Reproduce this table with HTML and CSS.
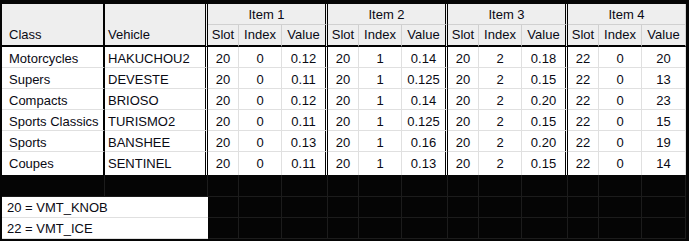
FILE: index.html
```html
<!DOCTYPE html>
<html>
<head>
<meta charset="utf-8">
<link rel="stylesheet" href="styles.css">
</head>
<body>
<div class="sheet">
  <div class="cell head hclass span2">Class</div>
  <div class="cell head hveh span2">Vehicle</div>
  <div class="cell head item c3">Item 1</div>
  <div class="cell head item c3">Item 2</div>
  <div class="cell head item c3">Item 3</div>
  <div class="cell head item c3 last">Item 4</div>

  <div class="cell head sub">Slot</div><div class="cell head sub">Index</div><div class="cell head sub dbl">Value</div>
  <div class="cell head sub">Slot</div><div class="cell head sub">Index</div><div class="cell head sub dbl">Value</div>
  <div class="cell head sub">Slot</div><div class="cell head sub">Index</div><div class="cell head sub dbl">Value</div>
  <div class="cell head sub">Slot</div><div class="cell head sub">Index</div><div class="cell head sub last">Value</div>

  <div class="cell d cls">Motorcycles</div><div class="cell d veh">HAKUCHOU2</div>
  <div class="cell d n">20</div><div class="cell d n">0</div><div class="cell d n dbl">0.12</div>
  <div class="cell d n">20</div><div class="cell d n">1</div><div class="cell d n dbl">0.14</div>
  <div class="cell d n">20</div><div class="cell d n">2</div><div class="cell d n dbl">0.18</div>
  <div class="cell d n">22</div><div class="cell d n">0</div><div class="cell d n last">20</div>

  <div class="cell d cls">Supers</div><div class="cell d veh">DEVESTE</div>
  <div class="cell d n">20</div><div class="cell d n">0</div><div class="cell d n dbl">0.11</div>
  <div class="cell d n">20</div><div class="cell d n">1</div><div class="cell d n dbl">0.125</div>
  <div class="cell d n">20</div><div class="cell d n">2</div><div class="cell d n dbl">0.15</div>
  <div class="cell d n">22</div><div class="cell d n">0</div><div class="cell d n last">13</div>

  <div class="cell d cls">Compacts</div><div class="cell d veh">BRIOSO</div>
  <div class="cell d n">20</div><div class="cell d n">0</div><div class="cell d n dbl">0.12</div>
  <div class="cell d n">20</div><div class="cell d n">1</div><div class="cell d n dbl">0.14</div>
  <div class="cell d n">20</div><div class="cell d n">2</div><div class="cell d n dbl">0.20</div>
  <div class="cell d n">22</div><div class="cell d n">0</div><div class="cell d n last">23</div>

  <div class="cell d cls">Sports Classics</div><div class="cell d veh">TURISMO2</div>
  <div class="cell d n">20</div><div class="cell d n">0</div><div class="cell d n dbl">0.11</div>
  <div class="cell d n">20</div><div class="cell d n">1</div><div class="cell d n dbl">0.125</div>
  <div class="cell d n">20</div><div class="cell d n">2</div><div class="cell d n dbl">0.15</div>
  <div class="cell d n">22</div><div class="cell d n">0</div><div class="cell d n last">15</div>

  <div class="cell d cls">Sports</div><div class="cell d veh">BANSHEE</div>
  <div class="cell d n">20</div><div class="cell d n">0</div><div class="cell d n dbl">0.13</div>
  <div class="cell d n">20</div><div class="cell d n">1</div><div class="cell d n dbl">0.16</div>
  <div class="cell d n">20</div><div class="cell d n">2</div><div class="cell d n dbl">0.20</div>
  <div class="cell d n">22</div><div class="cell d n">0</div><div class="cell d n last">19</div>

  <div class="cell d cls lastrow">Coupes</div><div class="cell d veh lastrow">SENTINEL</div>
  <div class="cell d n lastrow">20</div><div class="cell d n lastrow">0</div><div class="cell d n dbl lastrow">0.11</div>
  <div class="cell d n lastrow">20</div><div class="cell d n lastrow">1</div><div class="cell d n dbl lastrow">0.13</div>
  <div class="cell d n lastrow">20</div><div class="cell d n lastrow">2</div><div class="cell d n dbl lastrow">0.15</div>
  <div class="cell d n lastrow">22</div><div class="cell d n lastrow">0</div><div class="cell d n last lastrow">14</div>

  <div class="g"></div><div class="g"></div><div class="g"></div><div class="g"></div><div class="g"></div><div class="g"></div><div class="g"></div>
  <div class="g"></div><div class="g"></div><div class="g"></div><div class="g"></div><div class="g"></div><div class="g"></div><div class="g"></div>

  <div class="cell legend">20 = VMT_KNOB</div>
  <div class="g"></div><div class="g"></div><div class="g"></div><div class="g"></div><div class="g"></div><div class="g"></div>
  <div class="g"></div><div class="g"></div><div class="g"></div><div class="g"></div><div class="g"></div><div class="g"></div>

  <div class="cell legend">22 = VMT_ICE</div>
  <div class="g"></div><div class="g"></div><div class="g"></div><div class="g"></div><div class="g"></div><div class="g"></div>
  <div class="g"></div><div class="g"></div><div class="g"></div><div class="g"></div><div class="g"></div><div class="g"></div>
</div>
</body>
</html>
```

FILE: styles.css
```css
* { box-sizing: border-box; }
html, body {
  margin: 0;
  background: #050505;
  height: 100%;
  overflow: hidden;
}
body {
  padding: 4px 0 0 2px;
  font-family: "Liberation Sans", Arial, sans-serif;
  font-size: 13px;
  color: #0a0a14;
}
.sheet {
  display: grid;
  grid-template-columns: 103px 103px 31px 43px 46px 31px 43px 46px 31px 43px 46px 31px 43px 44px;
  grid-template-rows: 21px 22px repeat(5, 21px) 23px 22px 21px 21px;
  width: 684px;
}
.cell {
  background: #fff;
  white-space: nowrap;
  overflow: hidden;
  line-height: 20px;
}
.head {
  background: #eeeeee;
  border-right: 1px solid #d0d0d0;
  border-bottom: 1px solid #d0d0d0;
}
.span2 {
  grid-row: span 2;
  display: flex;
  align-items: flex-end;
  border-bottom: 2px solid #000;
}
.hclass { padding-left: 7px; border-right: 2px solid #000; }
.hveh { padding-left: 3px; border-right: 3px double #000; }
.item {
  text-align: center;
  padding-top: 1px;
  border-right: 3px double #000;
}
.c3 { grid-column: span 3; }
.sub {
  text-align: center;
  border-bottom: 2px solid #000;
}
.d {
  padding-top: 2px;
  border-right: 1px solid #e0e0e0;
  border-bottom: 1px solid #e0e0e0;
}
.cls { padding-left: 7px; border-right: 2px solid #000; }
.veh { padding-left: 3px; border-right: 3px double #000; }
.n { text-align: center; }
.dbl { border-right: 3px double #000; }
.last { border-right: 1px solid #e0e0e0; }
.head.last { border-right: 1px solid #d0d0d0; }
.lastrow { border-bottom-width: 0; }
.g {
  border-right: 1px solid #1c1c1c;
  border-bottom: 1px solid #1c1c1c;
}
.legend {
  grid-column: span 2;
  padding-left: 5px;
  padding-top: 1px;
  border-bottom: 1px solid #e0e0e0;
}
```
